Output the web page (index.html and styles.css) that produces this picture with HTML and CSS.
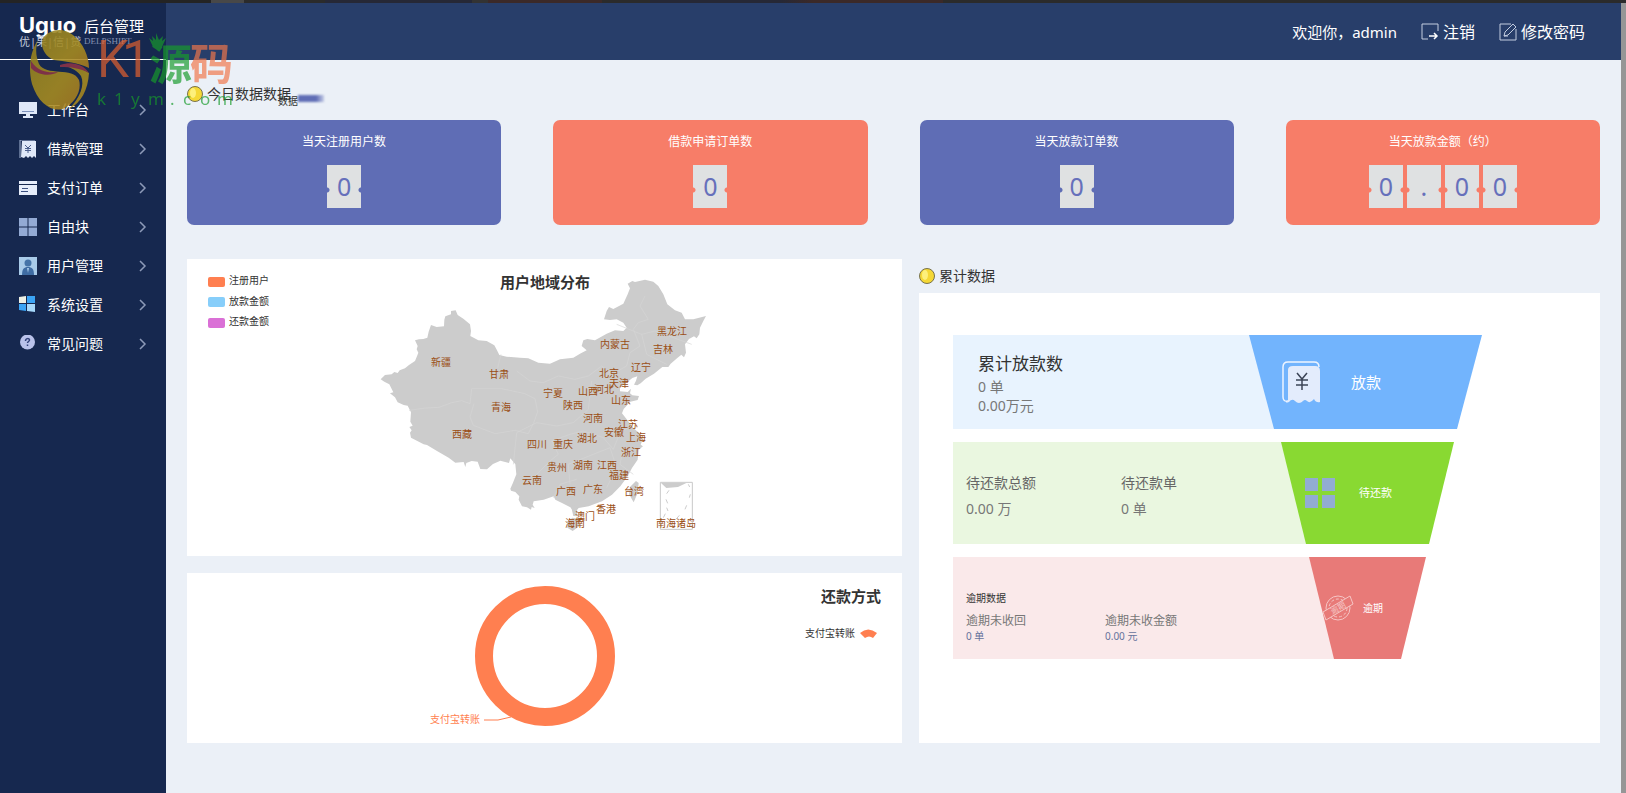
FILE: index.html
```html
<!DOCTYPE html>
<html lang="zh-CN">
<head>
<meta charset="utf-8">
<title>后台管理</title>
<link rel="stylesheet" href="styles.css">
</head>
<body>
<div class="page-top"></div>
<div class="app">
  <aside class="sidebar">
    <div class="brand">
      <div class="brand-mark">
        <span class="brand-name">Uguo</span>
        <span class="brand-cn">优|果|信|贷</span>
      </div>
      <div class="brand-title">
        <span class="brand-admin">后台管理</span>
        <span class="brand-sub">DELPSHIPT</span>
      </div>
    </div>
    <nav class="menu">
      <a class="menu-item" href="#">
        <svg class="menu-icon" viewBox="0 0 18 18"><path fill="#dfe8f8" d="M0 1h18v12H0z"/><path fill="#7d92bd" d="M3 10h12v1H3z"/><path fill="#dfe8f8" d="M7 13h4v2h3v2H4v-2h3z"/></svg>
        <span>工作台</span><svg class="chevron" viewBox="0 0 8 12"><path d="M1 1l5 5-5 5"/></svg>
      </a>
      <a class="menu-item" href="#">
        <svg class="menu-icon" viewBox="0 0 18 18"><path fill="none" stroke="#a5b6d6" d="M1 18V0h15"/><path fill="#dfe8f8" d="M3 1h14v17l-2-2-2 2-2-2-2 2-2-2-2 2-3-1z"/><path fill="none" stroke="#4d608d" d="M6 5l3 3 3-3M6 8.500h6M6 10.500h6M9 8v5"/></svg>
        <span>借款管理</span><svg class="chevron" viewBox="0 0 8 12"><path d="M1 1l5 5-5 5"/></svg>
      </a>
      <a class="menu-item" href="#">
        <svg class="menu-icon" viewBox="0 0 18 18"><path fill="#e6edfa" d="M0 2h18v3H0zM0 6h18v10H0z"/><path fill="#3b4f7f" d="M3 9h6v1H3zM2 12h7v1H2z"/></svg>
        <span>支付订单</span><svg class="chevron" viewBox="0 0 8 12"><path d="M1 1l5 5-5 5"/></svg>
      </a>
      <a class="menu-item" href="#">
        <svg class="menu-icon" viewBox="0 0 18 18"><path fill="#93aad4" d="M0 0h8.500v8.500H0zM9.500 0H18v8.500H9.500zM0 9.500h8.500V18H0zM9.500 9.500H18V18H9.500z"/></svg>
        <span>自由块</span><svg class="chevron" viewBox="0 0 8 12"><path d="M1 1l5 5-5 5"/></svg>
      </a>
      <a class="menu-item" href="#">
        <svg class="menu-icon" viewBox="0 0 18 18"><path fill="#a9cbe9" d="M0 0h18v18H0z"/><circle cx="9" cy="6" r="3.500" fill="#4674a8"/><path fill="#3f6ca3" d="M3 18c0-6 2-8 6-8s6 2 6 8z"/><path fill="#a9cbe9" d="M8 11h2l-1 5z"/></svg>
        <span>用户管理</span><svg class="chevron" viewBox="0 0 8 12"><path d="M1 1l5 5-5 5"/></svg>
      </a>
      <a class="menu-item" href="#">
        <svg class="menu-icon" viewBox="0 0 18 18"><path fill="#eef0e4" d="M0 1l7-1v7H0z"/><path fill="#3ba4f5" d="M8 0h8v7H8zM0 8h7v7l-7-1z"/><path fill="#a7d9fb" d="M8 8h8v8l-8-1z"/></svg>
        <span>系统设置</span><svg class="chevron" viewBox="0 0 8 12"><path d="M1 1l5 5-5 5"/></svg>
      </a>
      <a class="menu-item" href="#">
        <svg class="menu-icon" viewBox="0 0 18 18"><circle cx="8.500" cy="7" r="7.500" fill="#b9c2ea"/><path fill="none" stroke="#33427a" stroke-width="1.500" d="M6.500 6c0-3 4-3 4-1 0 1.500-2 1.500-2 3M8.500 9.500V11"/></svg>
        <span>常见问题</span><svg class="chevron" viewBox="0 0 8 12"><path d="M1 1l5 5-5 5"/></svg>
      </a>
    </nav>
  </aside>

  <div class="content">
    <header class="topbar">
      <span class="greeting">欢迎你，admin</span>
      <a class="top-link" href="#">
        <svg class="top-icon" viewBox="0 0 18 18"><path d="M17 8V1H1v15h6" /><path d="M8 13h8M13 10l3 3-3 3" stroke="#fff" stroke-width="1.500"/></svg>注销</a>
      <a class="top-link" href="#">
        <svg class="top-icon" viewBox="0 0 18 18"><path d="M12 1H1v16h16V6"/><path d="M6 9l8-8 3 3-8 8-4 1zM5 13h4"/></svg>修改密码</a>
    </header>

    <main class="main">
      <h2 class="section-title">
        <svg class="coin" viewBox="0 0 16 16"><circle cx="8" cy="8" r="7.500" fill="#f5d836" stroke="#77724d"/><ellipse cx="6" cy="7" rx="3" ry="5" fill="#fdf07c"/></svg>
        <span>今日数据</span><span class="repeat">数据</span><span class="ghost" aria-hidden="true">数据</span><span class="smear"></span>
      </h2>
      <section class="stats">
        <article class="stat blue"><h3>当天注册用户数</h3><div class="digits"><b>0</b></div></article>
        <article class="stat coral"><h3>借款申请订单数</h3><div class="digits"><b>0</b></div></article>
        <article class="stat blue"><h3>当天放款订单数</h3><div class="digits"><b>0</b></div></article>
        <article class="stat coral"><h3>当天放款金额（约）</h3><div class="digits"><b>0</b><b>.</b><b>0</b><b>0</b></div></article>
      </section>

      <div class="columns">
        <div class="left-col">
          <section class="panel">
            <svg class="chart" viewBox="0 0 715 297" role="img" aria-label="用户地域分布">
              <g class="legend">
                <rect x="21" y="18" width="17" height="10" rx="2" fill="#ff7f50"/><text x="42" y="25">注册用户</text>
                <rect x="21" y="38" width="17" height="10" rx="2" fill="#87cefa"/><text x="42" y="46">放款金额</text>
                <rect x="21" y="59" width="17" height="10" rx="2" fill="#da70d6"/><text x="42" y="66">还款金额</text>
              </g>
              <g transform="translate(183 -8) scale(.33333)">
                <path fill="#ccc" d="M32 385l13-13 20-2 8-7 10 3 6-8 16-6 12-10 18-12 5-12 5-13-5-10 3-10-8-17 12-3 13-1 12-4 4-18 7-20 17 6 22-2 1-20 3-10 17-6 0-10 14-2 6 14 17 11 20 17 3 20-2 15 24 13 25 2 23 13 8 15 7 14 22 5 40 3 25 2 30 13 35 3 30-13 40-5 20-12 20-10-15-13 5-17 12-4 23 4 35-20 25-10 25 2 10-10-10-15-20-10-20 2-18-2 8-25 7-12 13 6 30-16 13-28 7-18-7-14 14-8 8 3 30-7 25 6 15 13 15 25 12 30 23 18 20 7 10 20 25 0 38-10-8 15-10 20-2 20-8 12-8-6-15 8-12 16 3 25-6 14-8-8-12 10-20 17-7 10-18 0-25 20-25 15-15 14-10 6-10-2 6-12 4-13-15 5-25 20-12 7 0 13 23 2 10-10-3 14 7 6 20 2-4 12-22 5-20 22-5 13 20 25 15 20 20 17 5 22-4 10 7 5-13 10-3 30-17 25-13 25-22 30-25 25-30 20-40 15-30 5-8 10-7 0-10-12-25-13-20-10-5-10-30 10-30 5-3 10 6 10-9-3-2 8-12-7-15-3-10-20 2-10-12-13-13-4-2-6 8-18 10-25-3-30-15-18-4 14-26-7-22 10-18 16-20-1-8-22-18-2-16 6-3 12-5-15-25 2-20-15-35-20-30-18-10-2-38-20-3-15 5-7-7-10 10-4-7-12 2-28-10-20-12-2-18-8-8-15-15-12 10-3-12-24-15-8z"/>
                <path fill="#ccc" d="M592 812l15-12 25 4-4 22-20 14-16-10zM798 690l8 6-3 30-12 28-14-24 3-22zM603 765l18-2 0 25 5 8-16-1z"/>
                <path fill="none" stroke="#d4d4d4" stroke-width="2" d="M117 478l50-7 40-2 38-14 30-6 25 9 5-45 90 0 70 15 30 15 8 40-13 35-15 30-40-10-60 10-65-25-10-25 12-40M383 350l10-40M440 360l40 30 40 5 45-20 50 10 40-10 40-30 30 25 45-25 10-40 30-20-20-50 15-20 30-10-25-40 15-30M430 640l10-95 60-30 60 10 50-10 45-40 10-85M490 680l50-50 25-20-20-40 55-20 40-10 60 20 30 35 20-50 30-20M600 700l-5-60 75-30 50-20 20 60-30 60M760 590l-10 50 40 30M740 220l75 30 40-10 110 40M815 250l15 60 60 30M550 740l20-40 50-15"/>
                <path fill="none" stroke="#c8c8c8" stroke-width="3" d="M871 694h96v141h-96z"/>
                <path fill="#ccc" d="M873 696h76l-25 12-35 3z"/>
                <path fill="none" stroke="#ccc" stroke-width="3" d="M955 700l4 8M897 718l-7 10M888 745l5 12M890 770l4 10M945 775l5-12M958 740l3-10M880 800l6-12M918 805l10-12"/>
              </g>
              <g class="provinces">
                <text x="254" y="107">新疆</text><text x="312" y="119">甘肃</text><text x="314" y="152">青海</text><text x="275" y="179">西藏</text>
                <text x="366" y="138">宁夏</text><text x="401" y="136">山西</text><text x="386" y="150">陕西</text><text x="406" y="163">河南</text>
                <text x="417" y="134">河北</text><text x="422" y="118">北京</text><text x="432" y="128">天津</text><text x="454" y="112">辽宁</text>
                <text x="428" y="89">内蒙古</text><text x="485" y="76">黑龙江</text><text x="476" y="94">吉林</text><text x="434" y="145">山东</text>
                <text x="441" y="169">江苏</text><text x="427" y="177">安徽</text><text x="449" y="182">上海</text><text x="444" y="197">浙江</text>
                <text x="400" y="183">湖北</text><text x="350" y="189">四川</text><text x="376" y="189">重庆</text><text x="370" y="212">贵州</text>
                <text x="396" y="210">湖南</text><text x="420" y="210">江西</text><text x="432" y="220">福建</text><text x="345" y="225">云南</text>
                <text x="379" y="236">广西</text><text x="406" y="234">广东</text><text x="447" y="236">台湾</text><text x="419" y="254">香港</text>
                <text x="398" y="261">澳门</text><text x="388" y="268">海南</text><text x="489" y="268">南海诸岛</text>
              </g>
              <text class="chart-title" x="358" y="29" text-anchor="middle">用户地域分布</text>
            </svg>
          </section>
          <section class="panel">
            <svg class="chart" viewBox="0 0 715 170" role="img" aria-label="还款方式">
              <circle cx="358" cy="83" r="61" fill="none" stroke="#ff7f50" stroke-width="18"/>
              <path fill="none" stroke="#ff7f50" d="M297 147h14l13-3"/>
              <text class="pie-label" x="243" y="150">支付宝转账</text>
              <text class="chart-title" x="694" y="29" text-anchor="end">还款方式</text>
              <text class="legend" x="668" y="64" text-anchor="end">支付宝转账</text>
              <path fill="#ff7f50" d="M673 60q8-7 17 0l-4 5q-4-3-8 0z"/>
            </svg>
          </section>
        </div>

        <section class="right-col">
          <h2 class="section-title">
            <svg class="coin" viewBox="0 0 16 16"><circle cx="8" cy="8" r="7.500" fill="#f5d836" stroke="#77724d"/><ellipse cx="6" cy="7" rx="3" ry="5" fill="#fdf07c"/></svg>
            <span>累计数据</span>
          </h2>
          <div class="panel funnel">
            <div class="tier loan">
              <div class="tier-info"><h3>累计放款数</h3><p>0 单</p><p>0.00万元</p></div>
              <div class="tier-shape">
                <svg class="loan-icon" viewBox="0 0 38 42"><path fill="none" stroke="#eef5ff" stroke-width="1.500" d="M6 40q-5 1-5-4V6q0-5 5-5h26q5 0 5 5"/><path fill="#e3ecfc" d="M6 9q0-4 5-4h22q5 0 5 5v31q-4 1-6-3-4 5-7 2-2-2-4 0-4 4-8 0-3-3-6 1l-3 1 2-3z"/><path fill="none" stroke="#3c4557" stroke-width="1.500" d="M15 12l5 6 5-6M14 19h12M14 24h12M20 18v11"/></svg>
                <span>放款</span>
              </div>
            </div>
            <div class="tier due">
              <div class="tier-info pair">
                <div><h3>待还款总额</h3><p>0.00 万</p></div>
                <div><h3>待还款单</h3><p>0 单</p></div>
              </div>
              <div class="tier-shape">
                <svg class="due-icon" viewBox="0 0 30 30"><path fill="#92acd2" d="M0 0h13v13H0zM17 0h13v13H17zM0 17h13v13H0zM17 17h13v13H17z"/></svg>
                <span>待还款</span>
              </div>
            </div>
            <div class="tier overdue">
              <div class="tier-info">
                <h3>逾期数据</h3>
                <div class="pair">
                  <div><h4>逾期未收回</h4><p>0 单</p></div>
                  <div><h4>逾期未收金额</h4><p>0.00 元</p></div>
                </div>
              </div>
              <div class="tier-shape">
                <svg class="overdue-icon" viewBox="0 0 32 26"><g fill="none" stroke="#f5c5c5"><circle cx="16" cy="13" r="12"/><circle cx="16" cy="13" r="9" stroke-dasharray="3 2"/><path fill="#e87a78" d="M1 17L28 1l3 8L4 25z"/></g><text x="16" y="16" transform="rotate(-30 16 13)" text-anchor="middle">逾期</text></svg>
                <span>逾期</span>
              </div>
            </div>
          </div>
        </section>
      </div>
    </main>
  </div>
  <div class="scroll-edge"></div>
</div>

<svg class="watermark" viewBox="0 0 240 115" aria-hidden="true">
  <defs><linearGradient id="gold" x2="1" y2="1"><stop offset="0" stop-color="#94811f"/><stop offset=".6" stop-color="#a88d20"/><stop offset="1" stop-color="#a87b1f"/></linearGradient></defs>
  <g opacity=".88">
    <path fill="url(#gold)" d="M43 38C50 29 63 27 73 35 83 43 89 56 89 68 79 63 64 61 54 60 44 56 40 46 43 38z"/>
    <path fill="url(#gold)" d="M38 40C30 52 28 68 32 84 38 103 51 112 63 109 75 103 82 91 79 80 73 66 46 77 39 64 36 57 35 49 38 40z"/>
    <path fill="url(#gold)" d="M89 73C88 90 81 103 69 109 80 98 85 85 81 76 76 69 68 66 61 66 71 64 81 68 89 73z"/>
    <path fill="#8c3348" d="M31 61C38 72 48 73 58 72 50 77 37 75 31 68zM60 65C72 61 83 64 89 73 80 68 71 67 60 67z"/>
  </g>
  <g opacity=".68">
    <text class="wm-latin" x="97 122" y="77">K1</text>
    <text class="wm-cn wm-green" x="149" y="80">源</text>
    <text class="wm-cn wm-orange" x="190" y="80">码</text>
    <path fill="#179b2b" d="M149 38l4 3-1-5 4 4 0-7 3 7 4-4-1 5 4-3-4 9h-9z"/>
    <text class="wm-domain" x="97 114 131 148 170 183 200 217" y="105">k1ym.com</text>
  </g>
</svg>
</body>
</html>
```
FILE: styles.css
```css
* { box-sizing: border-box; }
body {
  margin: 0;
  min-height: 100vh;
  display: flex;
  flex-direction: column;
  background: #ebf0f7;
  color: #333;
  font: 14px/20px "Noto Sans", "Noto Sans CJK SC", sans-serif;
}
h2, h3, h4, p { margin: 0; font-weight: 400; }
a { color: inherit; text-decoration: none; }

.page-top { height: 3px; background: linear-gradient(90deg, #242424 13%, #484848 13% 15%, #2b2b2b 15% 20%, #262836 20% 29%, #333 29% 30%, #3b2928 30% 37%, #2b2b2b 37% 40%, #262836 40% 48%, #3b2928 50% 58%, #2b2b2b 58%); }
.app { flex: 1; display: flex; }

/* Sidebar */
.sidebar { width: 166px; flex: none; background: #16284f; color: #fff; }
.brand { height: 57px; padding: 12px 0 0 19px; display: flex; gap: 6px; border-bottom: 1px solid #fff; }
.brand-mark, .brand-title { display: flex; flex-direction: column; }
.brand-mark { width: 59px; }
.brand-name { font: 700 22px/20px Inter, sans-serif; }
.brand-cn { font-size: 11px; line-height: 14px; color: #c3cbdc; white-space: nowrap; }
.brand-admin { font-size: 15px; line-height: 22px; }
.brand-sub { font: 9px/8px "Liberation Serif", serif; color: #8290b1; }
.menu { padding-top: 30px; }
.menu-item { height: 39px; padding: 0 19px; display: flex; align-items: center; gap: 10px; }
.menu-icon { width: 18px; height: 18px; }
.chevron { width: 8px; height: 12px; margin-left: auto; fill: none; stroke: #8d9ab8; stroke-width: 1.5; }

/* Top bar */
.content { flex: 1; min-width: 0; }
.topbar { height: 57px; padding: 0 36px; display: flex; align-items: center; justify-content: flex-end; gap: 24px; background: #283e6a; color: #fff; font-size: 16px; }
.greeting { font-size: 15px; }
.top-link { display: flex; align-items: center; gap: 4px; }
.top-icon { width: 18px; height: 18px; fill: none; stroke: #c3cde0; stroke-width: 1; }
.scroll-edge { width: 5px; flex: none; background: #969696; }

/* Dashboard */
.main { padding: 24px 21px; }
.section-title { position: relative; height: 20px; display: flex; align-items: center; font-size: 14px; line-height: 20px; }
.coin { width: 16px; height: 16px; margin-right: 4px; }
.ghost { position: absolute; left: 91px; top: 10px; font-size: 10px; line-height: 14px; }
.smear { position: absolute; left: 111px; top: 11px; width: 26px; height: 7px; background: linear-gradient(90deg, #5f6db5 70%, #c5cce6); filter: blur(1px); }
.stats { margin-top: 16px; display: grid; grid-template-columns: repeat(4, 1fr); gap: 52px; }
.stat { height: 105px; padding-top: 12px; border-radius: 7px; color: #fff; text-align: center; }
.stat h3 { font-size: 12px; line-height: 20px; }
.blue { background: #5f6db5; --card: #5f6db5; }
.coral { background: #f77d68; --card: #f77d68; }
.digits { margin-top: 13px; display: flex; justify-content: center; gap: 4px; }
.digits b {
  width: 34px; height: 43px;
  color: #6670bb;
  font-size: 25px; line-height: 43px; font-weight: 400;
  background: radial-gradient(circle at 0 25px, var(--card) 2px, transparent 3px), radial-gradient(circle at 34px 25px, var(--card) 2px, transparent 3px), #dfe1e2;
}
.columns { margin-top: 34px; display: grid; grid-template-columns: 715fr 681fr; gap: 17px; }
.left-col { display: flex; flex-direction: column; gap: 17px; }
.panel { background: #fff; }
.chart { display: block; width: 100%; height: auto; }
.legend { font-size: 10px; fill: #333; }
.provinces { font-size: 10px; fill: #9a4e14; text-anchor: middle; }
.chart-title { font-size: 15px; font-weight: 700; fill: #333; }
.pie-label { font-size: 10px; fill: #ff7f50; }
.right-col { padding-top: 7px; display: flex; flex-direction: column; gap: 7px; }

/* Funnel */
.funnel { flex: 1; padding: 42px 118px 42px 34px; display: flex; flex-direction: column; gap: 13px; }
.tier { display: flex; height: 102px; }
.tier-info { flex: 1; margin-right: -26px; color: #777; }
.tier-shape { display: flex; align-items: center; color: #fff; clip-path: polygon(0 0, 100% 0, calc(100% - 25px) 100%, 25px 100%); }
.pair { display: flex; }

.loan { height: 94px; }
.loan .tier-info { padding: 15px 25px; background: #e8f3fe; line-height: 19px; }
.loan h3 { color: #333; font-size: 17px; line-height: 27px; }
.loan .tier-shape { width: 233px; padding-left: 33px; gap: 31px; background: #72b4fd; font-size: 15px; }
.loan-icon { width: 38px; height: 42px; }

.due { margin-right: 28px; }
.due .tier-info { padding: 28px 13px; background: #eaf7e0; }
.due .tier-info div { width: 155px; }
.due h3 { color: #666; font-size: 14px; line-height: 26px; }
.due p { line-height: 26px; }
.due .tier-shape { width: 173px; padding-left: 24px; gap: 24px; background: #89d932; font-size: 11px; }
.due-icon { width: 30px; height: 30px; }

.overdue { margin-right: 56px; }
.overdue .tier-info { padding: 31px 13px; background: #fae9ea; }
.overdue h3 { color: #333; font-size: 10px; line-height: 20px; }
.overdue h4 { font-size: 12px; line-height: 18px; padding-top: 4px; }
.overdue p { color: #66739c; font-size: 10px; line-height: 13px; }
.overdue .pair div { width: 139px; }
.overdue .tier-shape { width: 117px; padding-left: 13px; gap: 9px; background: #e87a78; font-size: 10px; }
.overdue-icon { width: 32px; height: 26px; }
.overdue-icon text { font-size: 8px; fill: #f5c5c5; }

/* Watermark floats over the page corner */
.watermark { position: absolute; left: 0; top: 0; width: 240px; height: 115px; pointer-events: none; }
.wm-latin { font: 400 51px Roboto, sans-serif; fill: #e8622e; }
.wm-cn { font-size: 43px; font-weight: 700; }
.wm-green { fill: #179b2b; }
.wm-orange { fill: #f2764a; }
.wm-domain { font: 17px "Noto Sans", sans-serif; fill: #179b2b; }
```
